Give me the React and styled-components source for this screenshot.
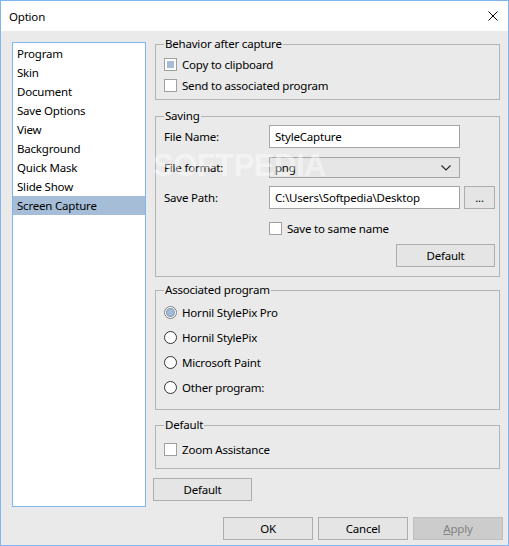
import React from "react";
import styled, { createGlobalStyle } from "styled-components";

const Global = createGlobalStyle`
  html, body { margin: 0; padding: 0; background: #ffffff; }
  body { font-family: "Noto Sans", "Open Sans", sans-serif; font-size: 11.5px; letter-spacing: -0.2px; color: #000; }
  * { box-sizing: border-box; }
`;

const Window = styled.div`
  width: 509px;
  height: 546px;
  border: 1px solid #7fb6ef;
  background: #eaeaea;
  display: flex;
  flex-direction: column;
`;

const TitleBar = styled.div`
  height: 30px;
  background: #ffffff;
  display: flex;
  align-items: center;
  justify-content: space-between;
  padding: 0 10px 0 8px;
`;

const Main = styled.div`
  display: flex;
  padding-left: 11px;
  gap: 7px;
`;

const List = styled.ul`
  list-style: none;
  margin: 11px 0 0 0;
  padding: 1px 0 0 0;
  width: 134px;
  height: 465px;
  background: #ffffff;
  border: 1px solid #7fb6ef;
`;

const ListItem = styled.li`
  height: 19px;
  line-height: 19px;
  padding-left: 4px;
  background: ${(p) => (p.$selected ? "#a5bdd6" : "transparent")};
`;

const Column = styled.div`
  position: relative;
  width: 347px;
  margin-top: 5px;
  display: flex;
  flex-direction: column;
  align-items: flex-start;
`;

const Group = styled.fieldset`
  margin: ${(p) => p.$mt || 0}px 0 0 2px;
  width: 345px;
  min-width: 0;
  border: 1px solid #b4b4b4;
  padding: ${(p) => p.$pt || 0}px 4px ${(p) => p.$pb || 0}px 8px;
  display: flex;
  flex-direction: column;
`;

const Legend = styled.legend`
  padding: 0 1px;
  margin-left: 0;
  line-height: 16px;
`;

const CheckRow = styled.label`
  display: flex;
  align-items: center;
  height: ${(p) => p.$h || 21}px;
  margin-left: ${(p) => p.$ml || 0}px;
  margin-top: ${(p) => p.$mt || 0}px;
  gap: 5px;
`;

const Box = styled.span`
  width: 13px;
  height: 13px;
  border: 1px solid #a0a0a0;
  background: #ffffff;
  padding: 2px;
  display: inline-flex;
  &::after {
    content: "";
    flex: 1;
    background: ${(p) => (p.$checked ? "#a5bdd6" : "transparent")};
  }
`;

const Radio = styled.span`
  width: 13px;
  height: 13px;
  border-radius: 50%;
  border: 1px solid ${(p) => (p.$checked ? "#7d7d7d" : "#333333")};
  background: #ffffff;
  display: inline-flex;
  align-items: center;
  justify-content: center;
  &::after {
    content: "";
    width: 7px;
    height: 7px;
    border-radius: 50%;
    background: ${(p) => (p.$checked ? "#a3bbd4" : "transparent")};
    box-shadow: ${(p) => (p.$checked ? "0 0 0 1px #7f97b2" : "none")};
  }
`;

const FieldRow = styled.div`
  display: flex;
  align-items: center;
  margin-top: ${(p) => p.$mt || 0}px;
`;

const Label = styled.span`
  width: 105px;
`;

const TextBox = styled.div`
  width: 191px;
  height: 23px;
  background: #ffffff;
  border: 1px solid #a5a5a5;
  padding-left: 5px;
  display: flex;
  align-items: center;
`;

const Combo = styled.div`
  width: 191px;
  height: 21px;
  background: #e6e6e6;
  border: 1px solid #a5a5a5;
  padding: 0 8px 0 5px;
  display: flex;
  align-items: center;
  justify-content: space-between;
`;

const Button = styled.button`
  width: ${(p) => p.$w || 90}px;
  height: 23px;
  margin: 0;
  padding: 0;
  font-family: inherit;
  font-size: 11.5px;
  letter-spacing: -0.2px;
  color: ${(p) => (p.disabled ? "#838383" : "#000")};
  background: ${(p) => (p.disabled ? "#cccccc" : "#e5e5e5")};
  border: 1px solid ${(p) => (p.disabled ? "#bfbfbf" : "#adadad")};
  margin-left: ${(p) => p.$ml || 0}px;
  margin-top: ${(p) => p.$mt || 0}px;
  align-self: ${(p) => p.$align || "auto"};
  u { text-decoration: underline; }
`;

const Footer = styled.div`
  display: flex;
  justify-content: flex-end;
  gap: 5px;
  margin-top: 10px;
  padding-right: 5px;
`;

const Watermark = styled.span`
  position: absolute;
  left: 0;
  top: 114px;
  font-family: "Liberation Sans", sans-serif;
  font-weight: 700;
  font-size: 31px;
  line-height: 31px;
  letter-spacing: -0.5px;
  color: rgba(255, 255, 255, 0.45);
  pointer-events: none;
`;

const Close = () => (
  <svg width="10" height="10" viewBox="0 0 10 10">
    <path d="M0.5 0.5 L9.5 9.5 M9.5 0.5 L0.5 9.5" stroke="#000" strokeWidth="1" />
  </svg>
);

const Chevron = () => (
  <svg width="10" height="6" viewBox="0 0 10 6">
    <path d="M0.5 0.5 L5 5 L9.5 0.5" stroke="#222" strokeWidth="1.1" fill="none" />
  </svg>
);

const items = [
  "Program",
  "Skin",
  "Document",
  "Save Options",
  "View",
  "Background",
  "Quick Mask",
  "Slide Show",
  "Screen Capture",
];

const radios = ["Hornil StylePix Pro", "Hornil StylePix", "Microsoft Paint", "Other program:"];

export default function App() {
  return (
    <>
      <Global />
      <Window>
        <TitleBar>
          <span>Option</span>
          <Close />
        </TitleBar>
        <Main>
          <List>
            {items.map((it) => (
              <ListItem key={it} $selected={it === "Screen Capture"}>
                {it}
              </ListItem>
            ))}
          </List>
          <Column>
            <Group $pt={2} $pb={3}>
              <Legend>Behavior after capture</Legend>
              <CheckRow>
                <Box $checked />
                Copy to clipboard
              </CheckRow>
              <CheckRow>
                <Box />
                Send to associated program
              </CheckRow>
            </Group>
            <Group $mt={8} $pt={1} $pb={9}>
              <Legend>Saving</Legend>
              <FieldRow>
                <Label>File Name:</Label>
                <TextBox>StyleCapture</TextBox>
              </FieldRow>
              <FieldRow $mt={9}>
                <Label>File format:</Label>
                <Combo>
                  <span>png</span>
                  <Chevron />
                </Combo>
              </FieldRow>
              <FieldRow $mt={8}>
                <Label>Save Path:</Label>
                <TextBox>C:\Users\Softpedia\Desktop</TextBox>
                <Button $w={31} $ml={4}>...</Button>
              </FieldRow>
              <CheckRow $ml={105} $mt={9}>
                <Box />
                Save to same name
              </CheckRow>
              <Button $w={99} $mt={5} $align="flex-end">Default</Button>
            </Group>
            <Group $mt={5} $pt={2} $pb={9}>
              <Legend>Associated program</Legend>
              {radios.map((r, i) => (
                <CheckRow key={r} $h={25}>
                  <Radio $checked={i === 0} />
                  {r}
                </CheckRow>
              ))}
            </Group>
            <Group $mt={7} $pt={6} $pb={8}>
              <Legend>Default</Legend>
              <CheckRow>
                <Box />
                Zoom Assistance
              </CheckRow>
            </Group>
            <Button $w={99} $mt={9}>Default</Button>
            <Watermark>SOFTPEDIA</Watermark>
          </Column>
        </Main>
        <Footer>
          <Button>OK</Button>
          <Button>Cancel</Button>
          <Button disabled>
            <u>A</u>pply
          </Button>
        </Footer>
      </Window>
    </>
  );
}
